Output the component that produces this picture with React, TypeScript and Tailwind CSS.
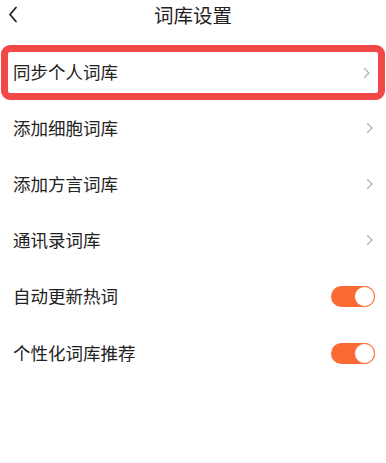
import { useState } from "react";

const font = { fontFamily: '"Noto Sans CJK SC", "Noto Sans", sans-serif' };

function Chevron() {
  return (
    <svg width="8" height="12" viewBox="0 0 8 12" className="shrink-0">
      <path d="M1.5 1.5 L6 6 L1.5 10.5" fill="none" stroke="#b3b3b3" strokeWidth="1.3" strokeLinecap="round" strokeLinejoin="round" />
    </svg>
  );
}

function Toggle({ on, onClick }: { on: boolean; onClick: () => void }) {
  return (
    <button
      onClick={onClick}
      className={`relative h-[21px] w-[44px] rounded-full ${on ? "bg-[#fb6a35]" : "bg-[#e5e5e5]"}`}
    >
      <span
        className={`absolute top-0 h-[21px] w-[21px] rounded-full border-[1.5px] bg-white ${on ? "right-0 border-[#fb6a35]" : "left-0 border-[#e5e5e5]"}`}
      />
    </button>
  );
}

export default function App() {
  const [hot, setHot] = useState(true);
  const [recommend, setRecommend] = useState(true);

  const links = ["添加细胞词库", "添加方言词库", "通讯录词库"];

  return (
    <div className="h-[463px] w-[386px] bg-white text-[#222]" style={font}>
      {/* 顶部标题 */}
      <div className="relative flex h-[45px] items-start justify-center pt-[1px]">
        <svg width="10" height="17" viewBox="0 0 10 17" className="absolute left-[8px] top-[6px]">
          <path d="M8 1.5 L2 8.5 L8 15.5" fill="none" stroke="#222" strokeWidth="1.8" strokeLinecap="round" strokeLinejoin="round" />
        </svg>
        <h1 className="text-[19.5px] leading-[28px] text-[#222]">词库设置</h1>
      </div>

      {/* 高亮项 */}
      <div className="mx-[1px] flex h-[55px] items-center justify-between rounded-[9px] border-[7px] border-[#f24848] pl-[5px] pr-[7px]">
        <span className="text-[17.5px]">同步个人词库</span>
        <Chevron />
      </div>

      {links.map((t) => (
        <div key={t} className="flex h-[56px] items-center justify-between pl-[13px] pr-[12px]">
          <span className="text-[17.5px]">{t}</span>
          <Chevron />
        </div>
      ))}

      <div className="flex h-[56px] items-center justify-between pl-[13px] pr-[11px]">
        <span className="text-[17.5px]">自动更新热词</span>
        <Toggle on={hot} onClick={() => setHot(!hot)} />
      </div>
      <div className="flex h-[58px] items-center justify-between pl-[13px] pr-[11px]">
        <span className="text-[17.5px]">个性化词库推荐</span>
        <Toggle on={recommend} onClick={() => setRecommend(!recommend)} />
      </div>
    </div>
  );
}
